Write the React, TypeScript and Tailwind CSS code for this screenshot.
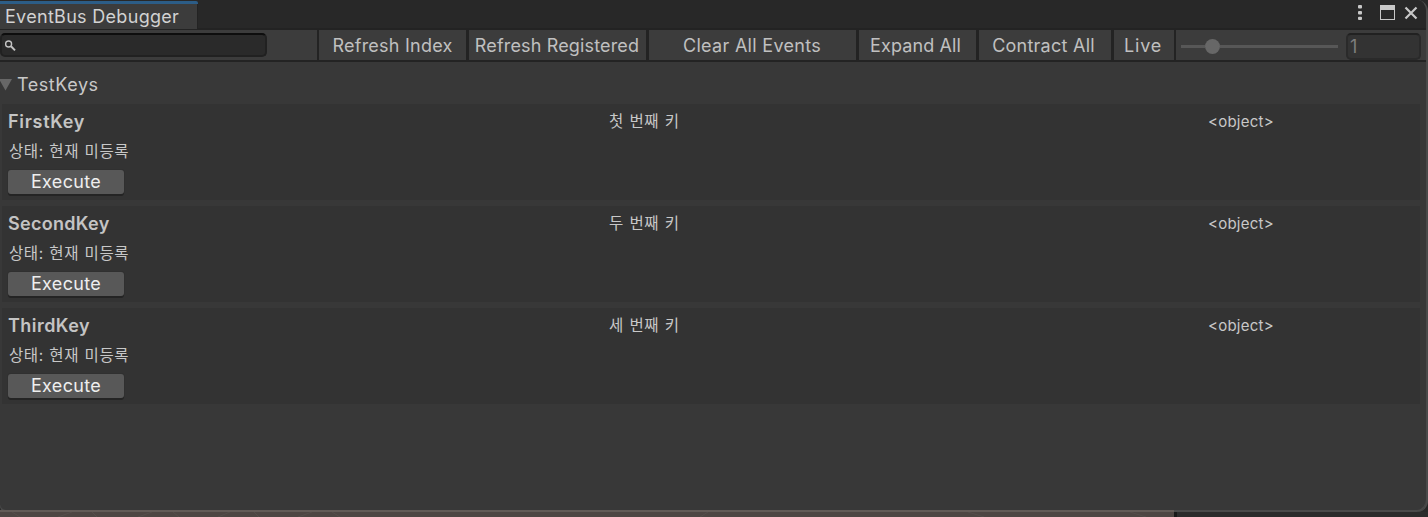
import React from "react";

const keys = [
  { name: "FirstKey", label: "첫 번째 키", title: "tracking-[0.7px]" },
  { name: "SecondKey", label: "두 번째 키", title: "tracking-[0.3px]" },
  { name: "ThirdKey", label: "세 번째 키", title: "tracking-[0.45px]" },
];

const actions = [
  { text: "Refresh Index", box: "w-[147px] mr-[3px] tracking-[0.23px]" },
  { text: "Refresh Registered", box: "w-[177px] mr-[3px] pr-px tracking-[0.15px]" },
  { text: "Clear All Events", box: "w-[207px] mr-[3px] pr-px tracking-[0.3px]" },
  { text: "Expand All", box: "w-[117px] mr-[3px] pr-1 tracking-[0.1px]" },
  { text: "Contract All", box: "w-[132px] mr-[3px] pr-[3px] tracking-[0.25px]" },
  { text: "Live", box: "w-[60px] mr-[2px] pr-[2px] tracking-[0.8px]" },
];

function TitleBar() {
  return (
    <header className="flex h-[30px] shrink-0 justify-between border-b-2 border-[#232323] bg-[#282828]">
      <div className="mt-px flex h-[28px] w-[198px] items-center rounded-tr-[2px] border-t-[3px] border-[#2c5d87] bg-[#3c3c3c] pl-[5px] pt-px text-[#d2d2d2] shadow-[inset_-1px_0_0_#232323]">
        <span className="tracking-[0.3px]">EventBus Debugger</span>
      </div>
      <div className="flex text-[#c8c8c8]">
        <svg width="70" height="28" viewBox="0 0 70 28">
          <g fill="currentColor">
            <rect x="2" y="5" width="4" height="3.400" rx="1" />
            <rect x="2" y="11" width="4" height="3.400" rx="1" />
            <rect x="2" y="16.800" width="4" height="3.200" rx="1" />
            <path fillRule="evenodd" d="M24 5h15v15H24zM25 10v9h13v-9z" />
          </g>
          <path d="M49.500 7.500l11 11M60.500 7.500l-11 11" stroke="currentColor" strokeWidth="2.200" fill="none" />
        </svg>
      </div>
    </header>
  );
}

function Toolbar() {
  return (
    <div className="flex h-8 shrink-0 border-b-2 border-[#232323] bg-[#232323] text-[#c0c0c0]">
      <div className="mr-[2px] w-[317px] bg-[#3c3c3c] pt-[3px]">
        <div className="flex h-6 w-[267px] items-center rounded-[5px] border-2 border-[#212121] border-t-[#0d0d0d] bg-[#2a2a2a] pl-[3px] pt-px">
          <svg width="12" height="12" viewBox="0 0 12 12" fill="none" stroke="#c4c4c4">
            <circle cx="3.600" cy="4" r="3" strokeWidth="1.400" />
            <path d="M6 6.300L10 10.400" strokeWidth="2" />
          </svg>
        </div>
      </div>
      {actions.map((a) => (
        <button
          key={a.text}
          className={`flex h-[30px] shrink-0 items-center justify-center whitespace-nowrap bg-[#3c3c3c] pt-px ${a.box}`}
        >
          {a.text}
        </button>
      ))}
      <div className="flex h-[30px] flex-1 items-start bg-[#3c3c3c]">
        <div className="ml-[5px] mt-[9px] flex h-[15px] w-[157px] items-center">
          <div className="h-[3px] w-6 bg-[#575757]" />
          <div className="size-[15px] shrink-0 rounded-full bg-[#676767]" />
          <div className="h-[3px] flex-1 bg-[#575757]" />
        </div>
        <div className="ml-2 mt-[3px] flex h-[27px] w-[75px] items-center rounded-[5px] border-2 border-[#2a2a2a] border-t-[#212121] bg-[#333333] pl-[2px] text-[#7d7d7d]">
          1
        </div>
      </div>
    </div>
  );
}

function KeyCard({ name, label, title }: { name: string; label: string; title: string }) {
  return (
    <section className="flex h-24 bg-[#333333] pl-[6px]">
      <div className="flex w-[601px] flex-col items-start">
        <h2 className={`mt-[6px] h-6 font-semibold leading-6 text-[#c4c4c4] ${title}`}>{name}</h2>
        <p className="mt-[6px] h-6 pl-px text-[15.5px] leading-6 tracking-[0.6px] [word-spacing:0.6px]">상태: 현재 미등록</p>
        <button className="mt-[6px] flex h-6 w-[116px] items-center justify-center rounded-[3px] bg-[#585858] tracking-[0.3px] text-[#eeeeee] shadow-[0_2px_0_#242424,0_0_0_1px_#303030]">
          Execute
        </button>
      </div>
      <span className="mt-[6px] w-[599px] text-[15.5px] leading-6 tracking-[0.6px] [word-spacing:0.6px]">{label}</span>
      <span className="mt-[6px] text-[15px] leading-6 tracking-[0.25px]">&lt;object&gt;</span>
    </section>
  );
}

export default function App() {
  return (
    <div className="flex h-[517px] w-[1428px] flex-col overflow-hidden bg-[#282828] font-['Inter','Noto_Sans_CJK_KR',sans-serif] text-[18px] leading-6 text-[#c8c8c8]">
      <main className="-mb-[2px] flex h-[512px] shrink-0 flex-col overflow-hidden rounded-r-[11px] rounded-bl-[6px] border-r-2 border-[#4a4a4a] bg-[#383838] shadow-[inset_0_-2px_0_#4a4a4a]">
        <TitleBar />
        <Toolbar />
        <div className="flex h-[42px] shrink-0 items-center pt-[3px]">
          <svg width="12" height="12" viewBox="0 0 12 12">
            <path d="M-1 0H12L5.500 11.500z" fill="#676767" />
          </svg>
          <span className="ml-[5px] tracking-[0.55px]">TestKeys</span>
        </div>
        <div className="ml-[2px] mr-[6px] flex flex-col gap-[6px]">
          {keys.map((k) => (
            <KeyCard key={k.name} {...k} />
          ))}
        </div>
      </main>
      <footer className="flex h-[7px] shrink-0">
        <div className="w-[1174px] border-t-2 border-[#635b57] bg-[#4e4643]">
          <svg className="block" width="1174" height="5" viewBox="0 0 1174 5" fill="none" stroke="#554e4b">
            <path d="M12 0l8 5M58 5l14-5M92 0l5 5M138 5l14-5M173 0l6 5M218 5l12-5M254 0l5 5M298 5l14-5M332 0l8 5M700 5l8-5M968 0l16 5M1130 0l16 5" />
          </svg>
        </div>
        <div className="mt-[2px] w-[3px] bg-[#181818]" />
        <div className="mt-[2px] flex-1 bg-[#2b2b2b]" />
      </footer>
    </div>
  );
}
